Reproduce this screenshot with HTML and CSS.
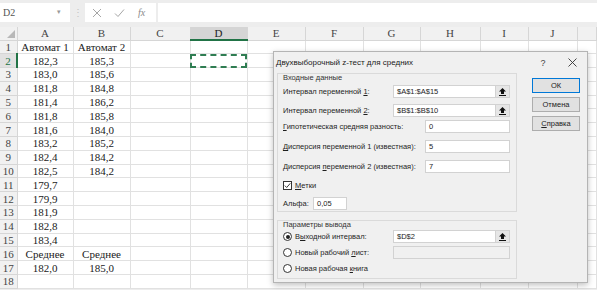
FILE: index.html
```html
<!DOCTYPE html>
<html lang="ru">
<head>
    <meta charset="UTF-8">
    <meta name="viewport" content="width=device-width, initial-scale=1.0">
    <title>Двухвыборочный z-тест для средних</title>
    <link rel="stylesheet" href="styles.css">
</head>
<body>

    <div class="app">

        <!-- Formula bar -->
        <div class="formula-bar">
            <div class="name-box">D2<span class="caret">▾</span></div>
            <div class="grip">⋮</div>
            <div class="fx-tools">
                <svg width="10" height="10" viewBox="0 0 10 10"><path d="M1 1 L9 9 M9 1 L1 9" stroke="#a6a6a6" stroke-width="1"/></svg>
                <svg width="11" height="10" viewBox="0 0 11 10"><path d="M1 5.5 L4 8.5 L10 1.5" stroke="#a6a6a6" stroke-width="1" fill="none"/></svg>
                <span class="fx">fx</span>
            </div>
            <div class="formula-input"></div>
        </div>

        <!-- Sheet -->
        <table class="sheet">
            <colgroup>
                <col style="width:17px"><col style="width:56px"><col style="width:57px"><col style="width:60px">
                <col style="width:57px"><col style="width:58px"><col style="width:58px"><col style="width:57px">
                <col style="width:60px"><col style="width:48px"><col style="width:49px"><col>
            </colgroup>
            <tr class="col-heads">
                <th class="corner"><span class="corner-mark"></span></th>
                <th>A</th><th>B</th><th>C</th><th class="active">D</th><th>E</th><th>F</th><th>G</th><th>H</th><th>I</th><th>J</th><th></th>
            </tr>
            <tr><th>1</th><td>Автомат 1</td><td>Автомат 2</td><td></td><td></td><td></td><td></td><td></td><td></td><td></td><td></td><td></td></tr>
            <tr><th class="active">2</th><td>182,3</td><td>185,3</td><td></td><td class="selected"></td><td></td><td></td><td></td><td></td><td></td><td></td><td></td></tr>
            <tr><th>3</th><td>183,0</td><td>185,6</td><td></td><td></td><td></td><td></td><td></td><td></td><td></td><td></td><td></td></tr>
            <tr><th>4</th><td>181,8</td><td>184,8</td><td></td><td></td><td></td><td></td><td></td><td></td><td></td><td></td><td></td></tr>
            <tr><th>5</th><td>181,4</td><td>186,2</td><td></td><td></td><td></td><td></td><td></td><td></td><td></td><td></td><td></td></tr>
            <tr><th>6</th><td>181,8</td><td>185,8</td><td></td><td></td><td></td><td></td><td></td><td></td><td></td><td></td><td></td></tr>
            <tr><th>7</th><td>181,6</td><td>184,0</td><td></td><td></td><td></td><td></td><td></td><td></td><td></td><td></td><td></td></tr>
            <tr><th>8</th><td>183,2</td><td>185,2</td><td></td><td></td><td></td><td></td><td></td><td></td><td></td><td></td><td></td></tr>
            <tr><th>9</th><td>182,4</td><td>184,2</td><td></td><td></td><td></td><td></td><td></td><td></td><td></td><td></td><td></td></tr>
            <tr><th>10</th><td>182,5</td><td>184,2</td><td></td><td></td><td></td><td></td><td></td><td></td><td></td><td></td><td></td></tr>
            <tr><th>11</th><td>179,7</td><td></td><td></td><td></td><td></td><td></td><td></td><td></td><td></td><td></td><td></td></tr>
            <tr><th>12</th><td>179,9</td><td></td><td></td><td></td><td></td><td></td><td></td><td></td><td></td><td></td><td></td></tr>
            <tr><th>13</th><td>181,9</td><td></td><td></td><td></td><td></td><td></td><td></td><td></td><td></td><td></td><td></td></tr>
            <tr><th>14</th><td>182,8</td><td></td><td></td><td></td><td></td><td></td><td></td><td></td><td></td><td></td><td></td></tr>
            <tr><th>15</th><td>183,4</td><td></td><td></td><td></td><td></td><td></td><td></td><td></td><td></td><td></td><td></td></tr>
            <tr><th>16</th><td>Среднее</td><td>Среднее</td><td></td><td></td><td></td><td></td><td></td><td></td><td></td><td></td><td></td></tr>
            <tr><th>17</th><td>182,0</td><td>185,0</td><td></td><td></td><td></td><td></td><td></td><td></td><td></td><td></td><td></td></tr>
            <tr><th>18</th><td></td><td></td><td></td><td></td><td></td><td></td><td></td><td></td><td></td><td></td><td></td></tr>
        </table>

        <!-- Dialog -->
        <div class="dialog">
            <div class="dialog-title">
                <span class="title-text">Двухвыборочный z-тест для средних</span>
                <span class="title-btn help">?</span>
                <span class="title-btn close">
                    <svg width="9" height="9" viewBox="0 0 9 9"><path d="M0.5 0.5 L8.5 8.5 M8.5 0.5 L0.5 8.5" stroke="#333" stroke-width="0.9"/></svg>
                </span>
            </div>

            <div class="dialog-body">
                <div class="dialog-main">

                    <div class="group input-group">
                        <div class="legend">Входные данные</div>
                        <div class="row r-first">
                            <span class="label">Интервал переменной <u>1</u>:</span>
                            <span class="field range">$A$1:$A$15</span>
                            <span class="range-btn"><svg width="7" height="8" viewBox="0 0 7 8"><path d="M3.5 0 L7 3.5 L5 3.5 L5 6 L2 6 L2 3.5 L0 3.5 Z M0 7 H7 V8 H0 Z" fill="#111"/></svg></span>
                        </div>
                        <div class="row r-2">
                            <span class="label">Интервал переменной <u>2</u>:</span>
                            <span class="field range">$B$1:$B$10</span>
                            <span class="range-btn"><svg width="7" height="8" viewBox="0 0 7 8"><path d="M3.5 0 L7 3.5 L5 3.5 L5 6 L2 6 L2 3.5 L0 3.5 Z M0 7 H7 V8 H0 Z" fill="#111"/></svg></span>
                        </div>
                        <div class="row r-3">
                            <span class="label wide"><u>Г</u>ипотетическая средняя разность:</span>
                            <span class="field short">0</span>
                        </div>
                        <div class="row r-next">
                            <span class="label wide"><u>Д</u>исперсия переменной 1 (известная):</span>
                            <span class="field short">5</span>
                        </div>
                        <div class="row r-next">
                            <span class="label wide">Дисперсия <u>п</u>еременной 2 (известная):</span>
                            <span class="field short">7</span>
                        </div>
                        <div class="row r-next check-row">
                            <span class="checkbox"><svg width="7" height="7" viewBox="0 0 7 7"><path d="M0.8 3.6 L2.7 5.5 L6.3 1.3" stroke="#222" stroke-width="0.9" fill="none"/></svg></span>
                            <span><u>М</u>етки</span>
                        </div>
                        <div class="row r-next">
                            <span class="label alpha">Альфа:</span>
                            <span class="field alpha-field">0,05</span>
                        </div>
                    </div>

                    <div class="group output-group">
                        <div class="legend">Параметры вывода</div>
                        <div class="row o-first">
                            <span class="label"><span class="radio checked"></span>В<u>ы</u>ходной интервал:</span>
                            <span class="field range">$D$2</span>
                            <span class="range-btn"><svg width="7" height="8" viewBox="0 0 7 8"><path d="M3.5 0 L7 3.5 L5 3.5 L5 6 L2 6 L2 3.5 L0 3.5 Z M0 7 H7 V8 H0 Z" fill="#111"/></svg></span>
                        </div>
                        <div class="row o-next">
                            <span class="label"><span class="radio"></span>Новый рабочий <u>л</u>ист:</span>
                            <span class="field disabled"></span>
                        </div>
                        <div class="row o-next">
                            <span class="label"><span class="radio"></span>Новая рабочая <u>к</u>нига</span>
                        </div>
                    </div>

                </div>

                <div class="dialog-buttons">
                    <button class="btn default">ОК</button>
                    <button class="btn">Отмена</button>
                    <button class="btn"><u>С</u>правка</button>
                </div>
            </div>
        </div>

    </div>

</body>
</html>
```

FILE: styles.css
```css
body {
    margin: 0;
    padding: 0;
    overflow: hidden;
}

.app {
    position: relative;
    width: 597px;
    height: 290px;
    overflow: hidden;
    background-color: #ededed;
    padding-top: 3px;
    box-sizing: border-box;
    font-family: "Liberation Serif", serif;
}

/* Formula bar */

.formula-bar {
    display: flex;
    height: 19px;
    margin-bottom: 5px;
}

.name-box {
    width: 70px;
    background-color: #fff;
    color: #555;
    font-size: 10px;
    line-height: 19px;
    padding-left: 3px;
    box-sizing: border-box;
    position: relative;
}

.name-box .caret {
    position: absolute;
    left: 57px;
    top: 0;
    font-size: 7px;
    color: #999;
}

.grip {
    width: 15px;
    text-align: center;
    color: #c4c4c4;
    font-size: 10px;
    line-height: 19px;
}

.fx-tools {
    width: 71px;
    background-color: #fff;
    display: flex;
    align-items: center;
    gap: 12px;
    padding-left: 7px;
    box-sizing: border-box;
}

.fx-tools .fx {
    font-style: italic;
    color: #8a8a8a;
    font-size: 10px;
    margin-left: 1px;
}

.formula-input {
    flex-grow: 1;
    margin-left: 2px;
    background-color: #fff;
}

/* Sheet */

.sheet {
    border-collapse: collapse;
    table-layout: fixed;
    width: 597px;
    font-size: 11px;
    color: #1a1a1a;
}

.sheet th, .sheet td {
    height: 13.8px;
    padding: 0;
    line-height: 12px;
    text-align: center;
    white-space: nowrap;
    overflow: hidden;
    box-sizing: border-box;
}

.sheet td {
    background-color: #fff;
    border-right: 1px solid #e1e1e1;
    border-bottom: 1px solid #e1e1e1;
}

.sheet th {
    background-color: #f1f1f1;
    color: #444;
    font-weight: normal;
    border-right: 1px solid #d6d6d6;
    border-bottom: 1px solid #d6d6d6;
}

.sheet .col-heads th {
    height: 13px;
    font-size: 11px;
}

.sheet .col-heads th.active {
    background-color: #d5d5d5;
    border-bottom: 2px solid #217346;
}

.sheet th.active {
    color: #217346;
    background-color: #e1e1e1;
    border-right: 2px solid #217346;
}

.sheet .col-heads th.active {
    color: #222;
    border-right: 1px solid #d6d6d6;
}

.sheet th.corner {
    position: relative;
}

.corner-mark {
    position: absolute;
    right: 2px;
    bottom: 2px;
    width: 0;
    height: 0;
    border-left: 8px solid transparent;
    border-bottom: 8px solid #b8b8b8;
}

.sheet td.selected {
    outline: 2px dashed #2f7d52;
    outline-offset: -2px;
}

/* Dialog */

.dialog {
    position: absolute;
    left: 273px;
    top: 51px;
    width: 315px;
    height: 232px;
    box-sizing: border-box;
    background-color: #f0f0f0;
    border: 1px solid #b4b4b4;
    box-shadow: 0 2px 6px rgba(0, 0, 0, 0.25);
    font-family: "Liberation Sans", Arial, sans-serif;
    font-size: 7.5px;
    color: #1e1e1e;
}

.dialog u {
    text-decoration-thickness: 0.6px;
    text-underline-offset: 1px;
}

.dialog-title {
    display: flex;
    align-items: center;
    height: 21px;
    padding-left: 2px;
    padding-right: 5px;
}

.title-text {
    font-size: 8px;
    color: #222;
    flex-grow: 1;
}

.title-btn {
    width: 20px;
    text-align: center;
    display: flex;
    justify-content: center;
    align-items: center;
}

.title-btn.help {
    font-size: 9px;
    color: #444;
    margin-right: 9px;
}

.dialog-body {
    display: flex;
    padding: 0 3px;
}

.dialog-main {
    width: 240px;
    display: flex;
    flex-direction: column;
    gap: 8px;
}

.group {
    border: 1px solid #dadada;
    padding: 0 6px 0 5px;
    display: flex;
    flex-direction: column;
}

.input-group {
    padding-bottom: 1px;
}

.output-group {
    padding-bottom: 3px;
}

.legend {
    height: 8px;
    line-height: 8px;
    color: #333;
}

.row {
    display: flex;
    align-items: center;
    height: 13px;
}

.r-first { margin-top: 3px; }
.r-2 { margin-top: 6px; }
.r-3 { margin-top: 3px; }
.r-next { margin-top: 7px; }
.o-first { margin-top: 1px; }
.o-next { margin-top: 3px; }

.check-row {
    height: 10px;
}

.label {
    display: block;
    width: 110px;
    flex-shrink: 0;
    line-height: 13px;
    white-space: nowrap;
}

.label.wide {
    width: 142px;
}

.label.alpha {
    width: 30px;
}

.field {
    height: 13px;
    box-sizing: border-box;
    background-color: #fff;
    border: 1px solid #d2d2d2;
    padding-left: 3px;
    line-height: 11px;
}

.field.range {
    width: 102px;
    border-right: none;
}

.field.short {
    width: 85px;
}

.field.alpha-field {
    width: 34px;
}

.field.disabled {
    width: 117px;
    background-color: #f0f0f0;
}

.range-btn {
    width: 15px;
    height: 13px;
    box-sizing: border-box;
    border: 1px solid #d2d2d2;
    background-color: #e6e6e6;
    display: flex;
    justify-content: center;
    align-items: center;
}

.checkbox {
    width: 9px;
    height: 9px;
    box-sizing: border-box;
    border: 1px solid #333;
    background-color: #fff;
    margin-right: 3px;
    display: flex;
    justify-content: center;
    align-items: center;
}

.radio {
    display: inline-block;
    vertical-align: -2px;
    width: 9px;
    height: 9px;
    box-sizing: border-box;
    border: 1px solid #333;
    border-radius: 50%;
    background-color: #fff;
    margin-right: 3px;
    position: relative;
}

.radio.checked::after {
    content: "";
    position: absolute;
    left: 1.5px;
    top: 1.5px;
    width: 4px;
    height: 4px;
    border-radius: 50%;
    background-color: #222;
}

.dialog-buttons {
    width: 48px;
    margin-left: 15px;
    margin-top: 5px;
    display: flex;
    flex-direction: column;
    gap: 4px;
}

.btn {
    height: 15px;
    padding: 0;
    font-family: "Liberation Sans", Arial, sans-serif;
    font-size: 7.5px;
    color: #222;
    background-color: #e1e1e1;
    border: 1px solid #adadad;
}

.btn.default {
    border-color: #0078d7;
}
```
